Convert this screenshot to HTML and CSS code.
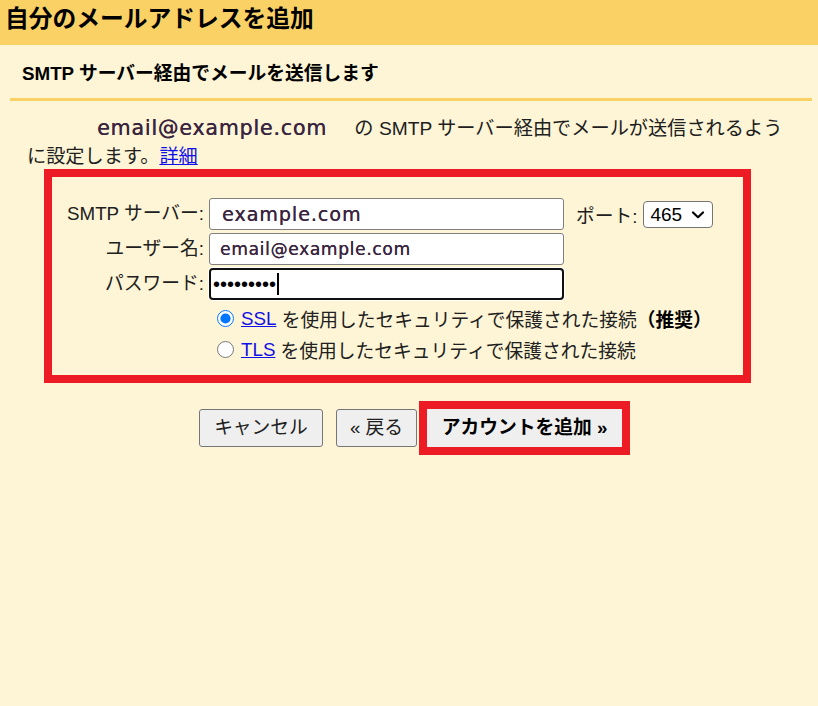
FILE: index.html
```html
<!DOCTYPE html>
<html lang="ja">
<head>
<meta charset="utf-8">
<title>自分のメールアドレスを追加</title>
<link rel="stylesheet" href="styles.css">
</head>
<body>
<div class="header">自分のメールアドレスを追加</div>
<div class="content">
  <div class="subtitle">SMTP サーバー経由でメールを送信します</div>
  <div class="rule"></div>
  <p class="intro"><span class="addr">email@example.com</span> の SMTP サーバー経由でメールが送信されるよう<br>に設定します。<a href="#">詳細</a></p>
  <div class="box">
    <div class="grid">
      <label class="lbl">SMTP サーバー:</label>
      <input class="field f-server" type="text" value="example.com">
      <div class="port">
        <span>ポート:</span>
        <span class="sel-wrap">
          <select class="sel"><option>465</option></select>
          <svg class="chev" width="14" height="10" viewBox="0 0 14 10"><path d="M2 2.5 L7 7.2 L12 2.5" fill="none" stroke="#000" stroke-width="2.2" stroke-linecap="round" stroke-linejoin="round"/></svg>
        </span>
      </div>

      <label class="lbl">ユーザー名:</label>
      <input class="field f-user" type="text" value="email@example.com">
      <span></span>

      <label class="lbl">パスワード:</label>
      <div class="field focused"><span class="dots">•••••••••</span><span class="caret"></span></div>
      <span></span>

      <div class="opts">
        <label class="opt"><input type="radio" name="sec" checked><a href="#">SSL</a>&nbsp;を使用したセキュリティで保護された接続<b>（推奨）</b></label>
        <label class="opt"><input type="radio" name="sec"><a href="#">TLS</a>&nbsp;を使用したセキュリティで保護された接続</label>
      </div>
    </div>
  </div>
  <div class="actions">
    <button class="btn btn-cancel">キャンセル</button>
    <button class="btn btn-back">« 戻る</button>
    <span class="highlight"><button class="btn btn-add">アカウントを追加 »</button></span>
  </div>
</div>
</body>
</html>
```

FILE: styles.css
```css
html, body {
  margin: 0;
  padding: 0;
}
body {
  background: #fef5d6;
  font-family: "Liberation Sans", "Noto Sans CJK JP", sans-serif;
  font-size: 18.75px;
  color: #202020;
  width: 818px;
  height: 706px;
  overflow: hidden;
}
.header {
  height: 45px;
  box-sizing: border-box;
  background: #f9d165;
  padding: 5px 5px 0;
  font-size: 23.75px;
  font-weight: bold;
  line-height: 28px;
  color: #000;
}
.content {
  padding: 0 6px 0 10px;
}
.subtitle {
  height: 53px;
  display: flex;
  align-items: center;
  padding-left: 12px;
  font-weight: bold;
  font-size: 18.75px;
  color: #000;
}
.rule {
  height: 3px;
  background: #f9d165;
}
.intro {
  margin: 14px 0 0;
  height: 54px;
  padding-left: 17px;
  line-height: 28px;
  white-space: nowrap;
  font-size: 19.2px;
}
.addr {
  display: inline-block;
  line-height: 20px;
  vertical-align: 0;
  margin-left: 70px;
  margin-right: 22px;
  font-family: "DejaVu Sans", sans-serif;
  font-size: 20.5px;
  letter-spacing: 0.85px;
  color: #3a2540;
  text-shadow: 0.4px 0 0 #3a2540;
}
a {
  color: #1010e8;
  text-decoration: underline;
}
.box {
  margin-left: 34px;
  width: 707px;
  box-sizing: border-box;
  border: 8px solid #ed1c24;
  padding: 21px 0 10px;
}
.grid {
  display: grid;
  grid-template-columns: 153px 355px auto;
  column-gap: 4px;
  row-gap: 3px;
  align-items: center;
}
.lbl {
  text-align: right;
  white-space: nowrap;
  line-height: 28px;
  padding-right: 1px;
}
.field {
  box-sizing: border-box;
  height: 32px;
  width: 355px;
  margin: 0;
  border: 1px solid #808080;
  border-radius: 3px;
  background: #fff;
  color: #3a2540;
  font-family: "DejaVu Sans", sans-serif;
  outline: none;
}
.f-server {
  padding: 0 0 0 12px;
  font-size: 19px;
  letter-spacing: 1px;
  text-shadow: 0.3px 0 0 #3a2540;
}
.f-user {
  padding: 0 0 0 10px;
  font-size: 17px;
  letter-spacing: 0.7px;
  text-shadow: 0.3px 0 0 #3a2540;
}
.focused {
  display: flex;
  align-items: center;
  border: 2px solid #101010;
  border-radius: 4px;
  box-shadow: 0 0 0 1px #fff;
  padding-left: 2px;
}
.dots {
  font-family: "Liberation Sans", sans-serif;
  font-size: 20px;
  color: #000;
  line-height: 20px;
}
.caret {
  display: inline-block;
  width: 2px;
  height: 22px;
  margin-left: 1px;
  background: #000;
}
.port {
  display: flex;
  align-items: center;
  padding-left: 8px;
  white-space: nowrap;
}
.port > span:first-child {
  margin-right: 6px;
}
.sel-wrap {
  position: relative;
  display: inline-block;
  height: 27px;
}
.sel {
  appearance: none;
  -webkit-appearance: none;
  display: block;
  height: 27px;
  width: 70px;
  box-sizing: border-box;
  font-family: "Liberation Sans", sans-serif;
  font-size: 19px;
  color: #000;
  background: #fff;
  border: 1px solid #767676;
  border-radius: 4px;
  padding: 0 0 0 6px;
  margin: 0;
}
.chev {
  position: absolute;
  right: 8px;
  top: 9px;
  pointer-events: none;
}
.opts {
  grid-column: 2 / span 2;
  display: flex;
  flex-direction: column;
}
.opt {
  display: flex;
  align-items: center;
  height: 31px;
  white-space: nowrap;
}
.opt input {
  width: 17px;
  height: 17px;
  margin: 0 7px 0 8px;
  accent-color: #0075ff;
}
.opt b {
  color: #000;
}
.actions {
  display: flex;
  align-items: center;
  margin-top: 18px;
  padding-left: 189px;
}
.btn {
  height: 38px;
  box-sizing: border-box;
  border: 1px solid #767676;
  border-radius: 3px;
  background: #efefef;
  font-family: "Liberation Sans", "Noto Sans CJK JP", sans-serif;
  font-size: 18.75px;
  color: #202020;
  line-height: 1;
  white-space: nowrap;
  margin: 0;
}
.btn-cancel {
  width: 124px;
}
.btn-back {
  width: 81px;
  margin-left: 13px;
}
.highlight {
  display: flex;
  margin-left: 2px;
  border: 8px solid #ed1c24;
}
.btn-add {
  width: 195px;
  border: none;
  border-radius: 0;
  font-weight: bold;
  color: #000;
}
```
